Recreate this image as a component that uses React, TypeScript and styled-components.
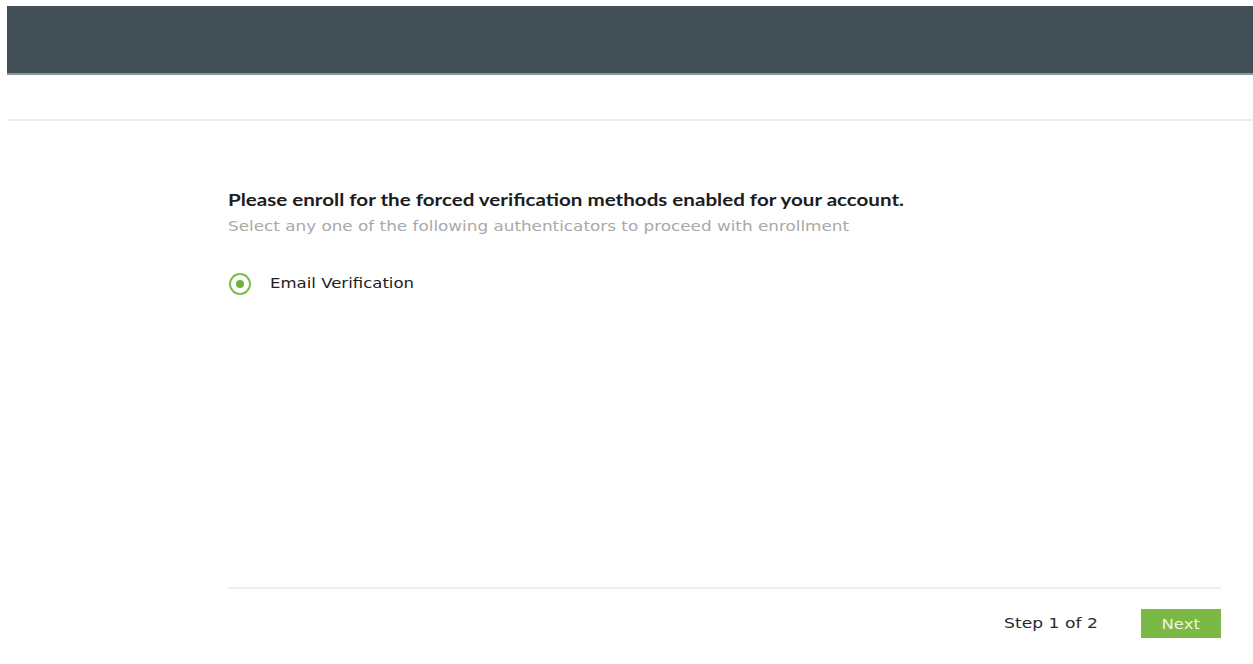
import React from "react";
import styled, { createGlobalStyle } from "styled-components";

const Global = createGlobalStyle`
  html, body { margin: 0; padding: 0; background: #fff; }
  body { font-family: "DejaVu Sans", Verdana, sans-serif; }
`;

const Page = styled.div`
  padding: 6px 0 0 7px;
  height: 664px;
  box-sizing: border-box;
  display: flex;
  flex-direction: column;
`;

const TopBar = styled.header`
  height: 67px;
  background: #434f57;
  border-bottom: 2px solid #8b959b;
`;

const SubBar = styled.div`
  height: 44px;
  border-bottom: 2px solid #eeeeee;
`;

const Content = styled.main`
  flex: 1;
  display: flex;
  flex-direction: column;
  padding: 68px 32px 0 221px;
`;

const Wide = styled.span<{ $origin?: string; $scale?: number }>`
  display: inline-block;
  white-space: nowrap;
  transform: scaleX(${(p) => p.$scale ?? 1.225});
  transform-origin: ${(p) => p.$origin ?? "left center"};
`;

const Title = styled.h1`
  margin: 0;
  font-family: Lato, "Open Sans", sans-serif;
  font-weight: 700;
  font-size: 17px;
  color: #1c1c1c;
  line-height: 22px;
`;

const Subtitle = styled.p`
  margin: 6px 0 0;
  font-size: 13.5px;
  color: #a9a9a9;
  line-height: 18px;
`;

const Options = styled.div`
  margin-top: 36px;
  display: flex;
  flex-direction: column;
  gap: 12px;
  padding-left: 1px;
`;

const OptionRow = styled.label`
  display: flex;
  align-items: center;
  gap: 19px;
  font-size: 13.5px;
  color: #222;
  cursor: pointer;
`;

const Radio = styled.span<{ $checked: boolean }>`
  width: 22px;
  height: 22px;
  box-sizing: border-box;
  border-radius: 50%;
  border: 2px solid #7cbf4a;
  display: flex;
  align-items: center;
  justify-content: center;
  margin-top: 2px;
  &::after {
    content: "";
    width: 8px;
    height: 8px;
    border-radius: 50%;
    background: ${(p) => (p.$checked ? "#6cb33f" : "transparent")};
  }
`;

const Spacer = styled.div`
  flex: 1;
`;

const Footer = styled.footer`
  border-top: 2px solid #eeeeee;
  height: 77px;
  display: flex;
  align-items: flex-start;
  justify-content: flex-end;
  padding-top: 20px;
  gap: 43px;
  box-sizing: border-box;
`;

const StepText = styled.span`
  font-size: 13.5px;
  color: #2a2a2a;
  line-height: 29px;
`;

const NextButton = styled.button`
  width: 80px;
  height: 29px;
  border: none;
  padding: 0;
  background: #7cb944;
  color: #eaf5df;
  font-family: "DejaVu Sans", Verdana, sans-serif;
  font-size: 13.5px;
  cursor: pointer;
`;

export default function App() {
  return (
    <>
      <Global />
      <Page>
        <TopBar />
        <SubBar />
        <Content>
          <Title>
            <Wide $scale={1.21}>Please enroll for the forced verification methods enabled for your account.</Wide>
          </Title>
          <Subtitle>
            <Wide $scale={1.245}>Select any one of the following authenticators to proceed with enrollment</Wide>
          </Subtitle>
          <Options>
            <OptionRow>
              <Radio $checked />
              <Wide>Email Verification</Wide>
            </OptionRow>
          </Options>
          <Spacer />
          <Footer>
            <StepText>
              <Wide $origin="right center" $scale={1.27}>Step 1 of 2</Wide>
            </StepText>
            <NextButton>
              <Wide $origin="center">Next</Wide>
            </NextButton>
          </Footer>
        </Content>
      </Page>
    </>
  );
}
